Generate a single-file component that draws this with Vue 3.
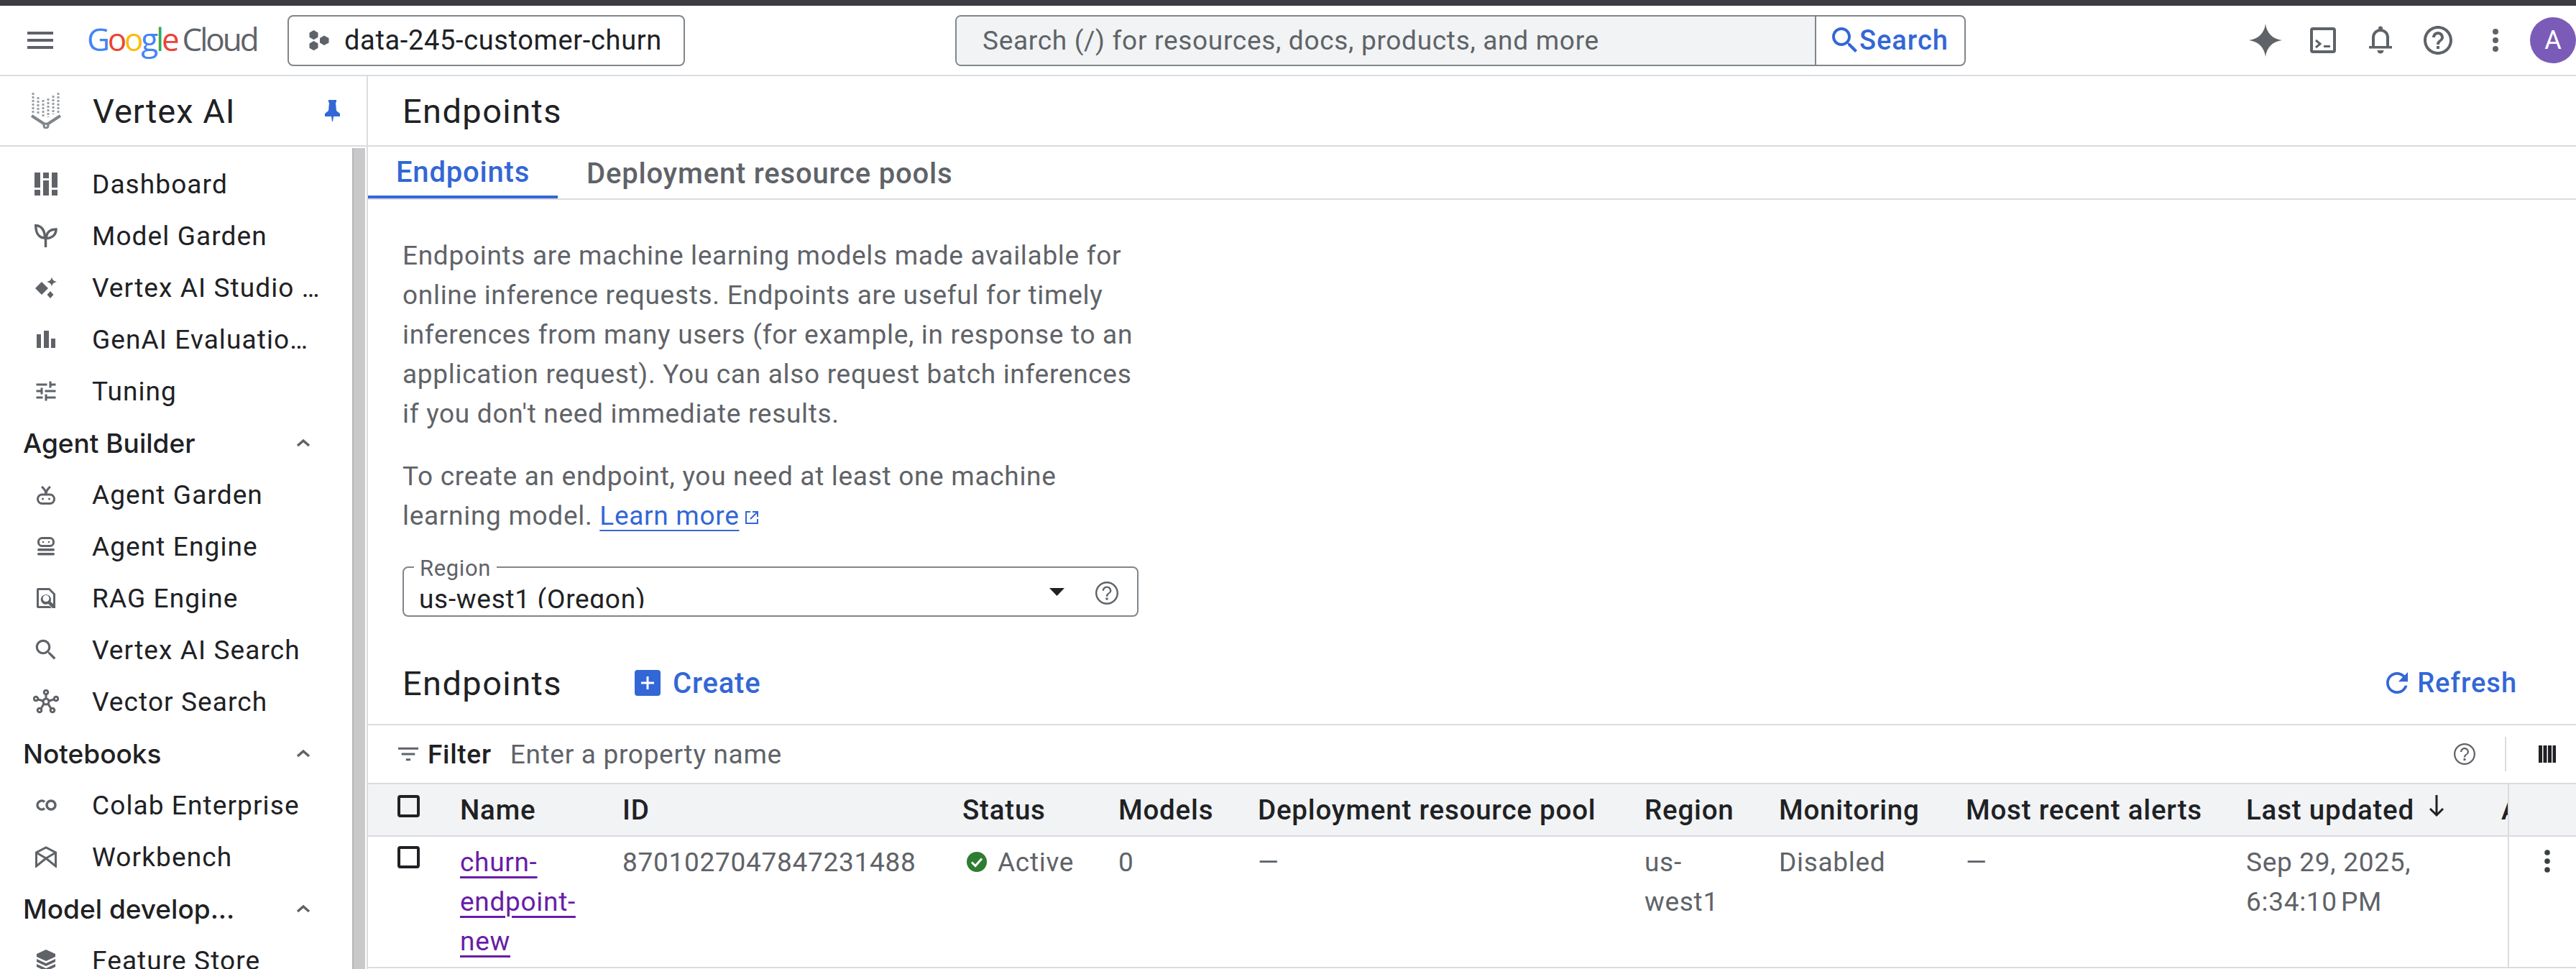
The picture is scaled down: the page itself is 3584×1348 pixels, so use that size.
<script setup>
const navGroups = [
  { items: [
    { label: 'Dashboard', icon: 'dashboard' },
    { label: 'Model Garden', icon: 'sprout' },
    { label: 'Vertex AI Studio Overview', icon: 'spark' },
    { label: 'GenAI Evaluation Service', icon: 'bars' },
    { label: 'Tuning', icon: 'tune' },
  ] },
  { title: 'Agent Builder', items: [
    { label: 'Agent Garden', icon: 'agentGarden' },
    { label: 'Agent Engine', icon: 'agentEngine' },
    { label: 'RAG Engine', icon: 'rag' },
    { label: 'Vertex AI Search', icon: 'search' },
    { label: 'Vector Search', icon: 'vector' },
  ] },
  { title: 'Notebooks', items: [
    { label: 'Colab Enterprise', icon: 'colab' },
    { label: 'Workbench', icon: 'workbench' },
  ] },
  { title: 'Model develop...', items: [
    { label: 'Feature Store', icon: 'store' },
  ] },
]
const heads = ['Name', 'ID', 'Status', 'Models', 'Deployment resource pool', 'Region', 'Monitoring', 'Most recent alerts']
</script>

<template>
  <div class="page">
    <div class="topstrip"></div>
    <header class="topbar">
      <svg class="menu" viewBox="0 0 36 24"><path d="M0 0h36v4H0zM0 10h36v4H0zM0 20h36v4H0z" /></svg>
      <div class="logo"><span class="lb">G</span><span class="lr">o</span><span class="ly">o</span><span class="lb">g</span><span class="lg">l</span><span class="lr">e</span><span class="cloud">Cloud</span></div>
      <div class="project">
        <svg class="project-icon" viewBox="0 0 28 28"><path d="M6.500 0l6 3.400v6.400l-6 3.400-6-3.400V3.400zM6.500 15l6 3.400v6.400l-6 3.400-6-3.400v-6.400zM21 7.500l6.500 3.500v6.500L21 21l-6-3.500V11z" /></svg>
        <span>data-245-customer-churn</span>
      </div>
      <div class="search">
        <div class="search-field">Search (/) for resources, docs, products, and more</div>
        <div class="search-btn">
          <svg class="search-icon" viewBox="3 3 18 18"><path d="M15.500 14h-.79l-.28-.27C15.410 12.590 16 11.110 16 9.500 16 5.910 13.090 3 9.500 3S3 5.910 3 9.500 5.910 16 9.500 16c1.610 0 3.090-.59 4.230-1.570l.27.28v.79l5 4.990L20.490 19l-4.990-5zm-6 0C7.010 14 5 11.990 5 9.500S7.010 5 9.500 5 14 7.010 14 9.500 11.990 14 9.500 14z" /></svg>
          <span>Search</span>
        </div>
      </div>
      <div class="top-actions">
        <div class="act"><svg width="48" height="48" viewBox="0 0 48 48"><path d="M24 1C25.500 14 34 22.500 47 24 34 25.500 25.500 34 24 47 22.500 34 14 25.500 1 24 14 22.500 22.500 14 24 1z" /></svg></div>
        <div class="act"><svg width="36" height="36" viewBox="0 0 36 36"><rect x="2" y="2" width="32" height="32" rx="2" class="ln" /><path d="M8 18l6 5-6 5" class="ln3" /><path d="M19 25h9v3h-9z" /></svg></div>
        <div class="act"><svg width="32" height="40" viewBox="0 0 32 40"><path d="M0 28h32v3.500H0zM11.500 34h9a4.500 4.500 0 0 1-9 0z" /><circle cx="16" cy="3.500" r="3" /><path d="M6 29V16a10 10 0 0 1 20 0v13" class="ln" /></svg></div>
        <div class="act"><svg width="48" height="48" viewBox="0 0 24 24"><path d="M11 18h2v-2h-2v2zm1-16C6.480 2 2 6.480 2 12s4.480 10 10 10 10-4.480 10-10S17.520 2 12 2zm0 18c-4.410 0-8-3.590-8-8s3.590-8 8-8 8 3.590 8 8-3.590 8-8 8zm0-14c-2.210 0-4 1.790-4 4h2c0-1.100.9-2 2-2s2 .9 2 2c0 2-3 1.750-3 5h2c0-2.250 3-2.500 3-5 0-2.210-1.790-4-4-4z" /></svg></div>
        <div class="act"><svg width="8" height="32" viewBox="0 0 8 32"><circle cx="4" cy="4" r="4" /><circle cx="4" cy="16" r="4" /><circle cx="4" cy="28" r="4" /></svg></div>
      </div>
      <div class="avatar">A</div>
    </header>

    <div class="body">
      <aside class="sidebar">
        <div class="side-head">
          <svg class="vertex" viewBox="0 0 44 50">
            <g class="vdots">
              <path d="M4 0v28" stroke-dasharray="3 2" />
              <path d="M11 6v24" stroke-dasharray="3 2" />
              <path d="M18 10v24" stroke-dasharray="3 2" />
              <path d="M25 8v26" stroke-dasharray="3 2" />
              <path d="M32 4v26" stroke-dasharray="3 2" />
              <path d="M39 0v28" stroke-dasharray="3 2" />
            </g>
            <path class="vv" d="M2 32l20 13 20-13" />
            <circle class="vc" cx="22" cy="46" r="3" />
          </svg>
          <span class="side-title">Vertex AI</span>
          <svg class="pin" viewBox="0 0 21 30"><path d="M5 0h11v3l-1 1 1 11 5 4v4H12l-1 7H10l-1-7H0v-4l5-4 1-11-1-1z" /></svg>
        </div>
        <nav class="nav">
          <template v-for="g in navGroups" :key="g.title || 'top'">
            <div v-if="g.title" class="sec">
              <span>{{ g.title }}</span>
              <svg class="chev" viewBox="0 0 20 12"><path d="M2 10l8-7 8 7" /></svg>
            </div>
            <div v-for="it in g.items" :key="it.label" class="nav-row">
              <div class="nav-ic">
                <svg v-if="it.icon === 'dashboard'" width="32" height="32" viewBox="0 0 32 32"><path d="M0 0h8v21H0zM0 24h8v8H0zM12 0h8v8h-8zM12 11h8v21h-8zM24 0h8v21h-8zM24 24h8v8h-8z" /></svg>
                <svg v-else-if="it.icon === 'sprout'" width="32" height="32" viewBox="0 0 32 32"><g class="st"><path d="M14.500 19C6 19 1.750 12 1.750 1.750 10 1.750 14.500 9 14.500 19z" /><path d="M16.500 19.500C24 19.500 30 15 30 7c-8 0-13.500 4-13.500 12.500z" /><path d="M15.500 17v15" /></g></svg>
                <svg v-else-if="it.icon === 'spark'" width="32" height="32" viewBox="0 0 32 32"><path d="M10 8l9 9-9 9-9-9zM24 1c.6 4 2.500 6 7 7-4.500 1-6.400 3-7 7-.6-4-2.500-6-7-7 4.500-1 6.400-3 7-7zM22 21l4.500 5-4.500 5-4.500-5z" /></svg>
                <svg v-else-if="it.icon === 'bars'" width="26" height="24" viewBox="0 0 26 24"><path d="M0 5h6v19H0zM10 0h7v24h-7zM20 11h6v13h-6z" /></svg>
                <svg v-else-if="it.icon === 'tune'" width="36" height="36" viewBox="0 0 24 24"><path d="M3 17v2h6v-2H3zM3 5v2h10V5H3zm10 16v-2h8v-2h-8v-2h-2v6h2zM7 9v2H3v2h4v2h2V9H7zm14 4v-2H11v2h10zm-6-4h2V7h4V5h-4V3h-2v6z" /></svg>
                <svg v-else-if="it.icon === 'agentGarden'" width="26" height="28" viewBox="0 0 26 28"><g class="st2"><rect x="1.500" y="14" width="23" height="12.500" rx="6" /><path d="M13 14c0-5-2-8-6-11M13 14c0-5 2-8 6-11" /></g><circle cx="8.500" cy="20" r="1.500" /><circle cx="17.500" cy="20" r="1.500" /></svg>
                <svg v-else-if="it.icon === 'agentEngine'" width="24" height="26" viewBox="0 0 24 26"><g class="st2"><rect x="1.500" y="1.500" width="21" height="11" rx="5" /></g><circle cx="8" cy="7" r="1.300" /><circle cx="16" cy="7" r="1.300" /><rect y="16" width="24" height="3.500" rx="1.700" /><rect y="22" width="24" height="3.500" rx="1.700" /></svg>
                <svg v-else-if="it.icon === 'rag'" width="26" height="28" viewBox="0 0 26 28"><path fill-rule="evenodd" d="M2 0h16l8 8v20h-4l-6-6c-3 1.500-6 1-8-1-3-3-3-7.500 0-10s7-2.500 10 0c2 2 2.500 5 1.500 8l3.500 3V9l-6-6H3v22h15l3 3H2c-1 0-2-1-2-2V2C0 1 1 0 2 0zM13 10c-2.500 0-4.500 2-4.500 4.500S10.500 19 13 19s4.500-2 4.500-4.500S15.500 10 13 10z" /></svg>
                <svg v-else-if="it.icon === 'search'" width="38" height="38" viewBox="0 0 24 24"><path d="M15.500 14h-.79l-.28-.27C15.410 12.590 16 11.110 16 9.500 16 5.910 13.090 3 9.500 3S3 5.910 3 9.500 5.910 16 9.500 16c1.610 0 3.090-.59 4.230-1.570l.27.28v.79l5 4.990L20.490 19l-4.990-5zm-6 0C7.010 14 5 11.990 5 9.500S7.010 5 9.500 5 14 7.010 14 9.500 11.990 14 9.500 14z" /></svg>
                <svg v-else-if="it.icon === 'vector'" width="36" height="34" viewBox="0 0 36 34"><g class="st2"><circle cx="18" cy="17" r="4" /><circle cx="18" cy="4" r="2.800" /><circle cx="4" cy="13" r="2.800" /><circle cx="32" cy="13" r="2.800" /><circle cx="9" cy="29" r="2.800" /><circle cx="27" cy="29" r="2.800" /><path d="M18 7v6M7 14l7 2M29 14l-7 2M11 27l4-7M25 27l-4-7" /></g></svg>
                <svg v-else-if="it.icon === 'colab'" width="30" height="16" viewBox="0 0 30 16"><g class="st"><path d="M13 3.500a6 6 0 1 0 0 9" /><circle cx="22" cy="8" r="6" /></g></svg>
                <svg v-else-if="it.icon === 'workbench'" width="30" height="30" viewBox="0 0 30 30"><g class="st2"><path d="M1.500 28V9L15 2l13.500 7v19L15 17zM1.500 9L15 17l13.500-8" /></g></svg>
                <svg v-else-if="it.icon === 'store'" width="26" height="30" viewBox="0 0 26 30"><path d="M13 0l13 6v4l-13 6L0 10V6zM0 13l13 6 13-6v4l-13 6-13-6zM0 20l13 6 13-6v4l-13 6-13-6z" /></svg>
              </div>
              <span class="nav-label">{{ it.label }}</span>
            </div>
          </template>
        </nav>
        <div class="scrollbar"></div>
      </aside>

      <main class="main">
        <h1 class="page-title">Endpoints</h1>
        <div class="tabs">
          <div class="tab active">Endpoints</div>
          <div class="tab">Deployment resource pools</div>
        </div>
        <section class="intro">
          <p>Endpoints are machine learning models made available for online inference requests. Endpoints are useful for timely inferences from many users (for example, in response to an application request). You can also request batch inferences if you don't need immediate results.</p>
          <p class="p2">To create an endpoint, you need at least one machine learning model. <a class="more">Learn more</a><svg class="ext" viewBox="0 0 20 20"><path d="M8 2H2v16h16v-6M11 2h7v7M18 2L8 12" /></svg></p>
          <div class="select">
            <span class="sel-label">Region</span>
            <div class="sel-value">us-west1 (Oregon)</div>
            <svg class="sel-arrow" viewBox="0 0 21 11"><path d="M0 0h21L10.500 11z" /></svg>
            <svg class="sel-help" viewBox="2 2 20 20"><path d="M11 18h2v-2h-2v2zm1-16C6.480 2 2 6.480 2 12s4.480 10 10 10 10-4.480 10-10S17.520 2 12 2zm0 18.500c-4.700 0-8.500-3.800-8.500-8.500S7.300 3.500 12 3.500s8.500 3.800 8.500 8.500-3.800 8.500-8.500 8.500zM12 6c-2.210 0-4 1.790-4 4h1.500c0-1.400 1.100-2.500 2.500-2.500s2.500 1.100 2.500 2.500c0 2.200-3.300 2-3.300 5h1.600c0-2.400 3.200-2.600 3.200-5 0-2.210-1.790-4-4-4z" /></svg>
          </div>
        </section>
        <div class="list-head">
          <h2 class="list-title">Endpoints</h2>
          <div class="create">
            <svg class="create-ic" viewBox="0 0 36 36"><rect width="36" height="36" rx="4" /><path class="plus" d="M16.500 9h3v7.500H27v3h-7.500V27h-3v-7.500H9v-3h7.500z" /></svg>
            <span>Create</span>
          </div>
          <div class="refresh">
            <svg class="refresh-ic" viewBox="4 4 16 16"><path d="M17.650 6.350C16.200 4.900 14.210 4 12 4c-4.420 0-7.990 3.580-7.990 8s3.570 8 7.990 8c3.730 0 6.840-2.550 7.730-6h-2.080c-.82 2.330-3.040 4-5.650 4-3.310 0-6-2.690-6-6s2.690-6 6-6c1.660 0 3.140.69 4.220 1.780L13 11h7V4l-2.350 2.350z" /></svg>
            <span>Refresh</span>
          </div>
        </div>
        <div class="filter">
          <svg class="filter-ic" viewBox="3 6 18 12"><path d="M10 18h4v-2h-4v2zM3 6v2h18V6H3zm3 7h12v-2H6v2z" /></svg>
          <span class="filter-lb">Filter</span>
          <span class="filter-ph">Enter a property name</span>
          <svg class="filter-help" viewBox="2 2 20 20"><path d="M11 18h2v-2h-2v2zm1-16C6.480 2 2 6.480 2 12s4.480 10 10 10 10-4.480 10-10S17.520 2 12 2zm0 18.500c-4.700 0-8.500-3.800-8.500-8.500S7.300 3.500 12 3.500s8.500 3.800 8.500 8.500-3.800 8.500-8.500 8.500zM12 6c-2.210 0-4 1.790-4 4h1.500c0-1.400 1.100-2.500 2.500-2.500s2.500 1.100 2.500 2.500c0 2.200-3.300 2-3.300 5h1.600c0-2.400 3.200-2.600 3.200-5 0-2.210-1.790-4-4-4z" /></svg>
          <div class="filter-sep"></div>
          <svg class="cols" viewBox="0 0 24 24"><path d="M0 0h5v24H0zM6.500 0h5v24h-5zM13 0h5v24h-5zM19.500 0H24v24h-4.500z" /></svg>
        </div>
        <div class="grid head">
          <div class="cell check"><span class="box"></span></div>
          <div v-for="h in heads" :key="h" class="cell">{{ h }}</div>
          <div class="cell sort">Last updated <svg class="arrow" viewBox="0 0 24 34"><path d="M12 2v28M3 21l9 9 9-9" /></svg></div>
          <div class="cell clip">Actions</div>
          <div class="cell action"></div>
        </div>
        <div class="grid row">
          <div class="cell check"><span class="box"></span></div>
          <div class="cell name"><a class="link">churn-endpoint-new</a></div>
          <div class="cell">8701027047847231488</div>
          <div class="cell status">
            <svg class="ok" viewBox="0 0 28 28"><circle cx="14" cy="14" r="14" /><path d="M7 14.500l5 5 9-10" /></svg>
            <span>Active</span>
          </div>
          <div class="cell">0</div>
          <div class="cell">—</div>
          <div class="cell region">us-west1</div>
          <div class="cell">Disabled</div>
          <div class="cell">—</div>
          <div class="cell date">Sep 29, 2025, 6:34:10&#8239;PM</div>
          <div class="cell clip"></div>
          <div class="cell action">
            <svg class="kebab" viewBox="0 0 8 32"><circle cx="4" cy="4" r="3.800" /><circle cx="4" cy="16" r="3.800" /><circle cx="4" cy="28" r="3.800" /></svg>
          </div>
        </div>
      </main>
    </div>
  </div>
</template>

<style>
html, body { margin: 0; background: #fff; overflow: hidden; }
</style>

<style scoped>
.page {
  width: 3584px; height: 1348px; overflow: hidden; background: #fff; color: #202124;
  font-family: Roboto, "Liberation Sans", sans-serif; font-size: 37px; letter-spacing: 0.7px;
}
.topstrip { height: 8px; background: #3c3c41; }
.topbar { height: 96px; display: flex; align-items: center; border-bottom: 2px solid #dadce0; fill: #5f6368; }
.menu { width: 36px; height: 24px; margin-left: 38px; }
.logo { margin-left: 47px; width: 231px; flex: none; font-family: "Open Sans", sans-serif; font-size: 44px; letter-spacing: -3.200px; white-space: nowrap; line-height: 1; margin-top: -4px; }
.lb { color: #4285f4; } .lr { color: #ea4335; } .ly { color: #fbbc05; } .lg { color: #34a853; }
.cloud { color: #5f6368; margin-left: 7px; letter-spacing: -3px; }
.project { margin-left: 48px; width: 553px; height: 71px; box-sizing: border-box; border: 2px solid #80868b; border-radius: 8px; display: flex; align-items: center; padding-left: 28px; gap: 21px; white-space: nowrap; font-size: 38px; letter-spacing: 0.65px; }
.project-icon { width: 28px; height: 28px; flex: none; }
.search { margin-left: 376px; width: 1406px; height: 71px; box-sizing: border-box; border: 2px solid #80868b; border-radius: 8px; display: flex; overflow: hidden; }
.search-field { flex: 1; background: #f1f3f4; color: #5f6368; padding-left: 36px; display: flex; align-items: center; white-space: nowrap; }
.search-btn { width: 208px; flex: none; border-left: 2px solid #80868b; box-sizing: border-box; display: flex; align-items: center; color: #3367d6; font-weight: 500; font-size: 38px; letter-spacing: 1px; padding-left: 22px; fill: #3367d6; gap: 2px; }
.search-icon { width: 36px; height: 36px; }
.top-actions { margin-left: 377px; display: flex; }
.act { width: 80px; height: 80px; display: flex; align-items: center; justify-content: center; }
.ln { fill: none; stroke: #5f6368; stroke-width: 4; }
.ln3 { fill: none; stroke: #5f6368; stroke-width: 3; }
.avatar { margin-left: 8px; width: 64px; height: 64px; border-radius: 50%; background: #7b5bb8; color: #fff; display: flex; align-items: center; justify-content: center; font-size: 36px; letter-spacing: 0; }

.body { display: flex; height: 1242px; }
.sidebar { width: 512px; flex: none; box-sizing: border-box; border-right: 2px solid #dadce0; position: relative; overflow: hidden; }
.side-head { height: 96px; border-bottom: 2px solid #dadce0; display: flex; align-items: center; position: relative; }
.vertex { width: 44px; height: 50px; margin-left: 42px; flex: none; }
.vdots { fill: none; stroke: #9aa0a6; stroke-width: 3; }
.vv { fill: none; stroke: #80868b; stroke-width: 4; }
.vc { fill: #fff; stroke: #80868b; stroke-width: 3; }
.side-title { margin-left: 43px; width: 198px; flex: none; font-size: 47px; letter-spacing: 1px; white-space: nowrap; }
.pin { width: 21px; height: 30px; margin-left: 125px; fill: #3367d6; flex: none; }
.nav { padding-top: 16px; width: 490px; }
.nav-row { height: 72px; display: flex; align-items: center; fill: #5f6368; letter-spacing: 1.1px; }
.nav-ic { width: 40px; height: 40px; margin-left: 44px; margin-right: 44px; display: flex; align-items: center; justify-content: center; flex: none; }
.nav-label { width: 318px; overflow: hidden; text-overflow: ellipsis; white-space: nowrap; }
.st { fill: none; stroke: #5f6368; stroke-width: 3.500; }
.st2 { fill: none; stroke: #5f6368; stroke-width: 3; }
.sec { height: 72px; display: flex; align-items: center; padding-left: 32px; font-family: Inter, sans-serif; font-weight: 500; font-size: 37px; letter-spacing: 0; position: relative; }
.chev { position: absolute; left: 412px; top: 30px; width: 20px; height: 12px; fill: none; stroke: #5f6368; stroke-width: 3.500; }
.scrollbar { position: absolute; left: 490px; top: 100px; width: 18px; bottom: 0; background: #c9c9c9; border-left: 2px solid #b5b5b5; box-sizing: border-box; }

.main { flex: 1; min-width: 0; overflow: hidden; }
.page-title { height: 96px; margin: 0; border-bottom: 2px solid #dadce0; display: flex; align-items: center; padding-left: 48px; font-weight: 400; font-size: 47px; letter-spacing: 1.400px; }
.tabs { display: flex; height: 72px; border-bottom: 2px solid #dadce0; font-size: 40px; letter-spacing: 0.8px; }
.tab { padding: 2px 40px 0; display: flex; align-items: center; font-weight: 500; color: #5f6368; }
.tab.active { width: 264px; box-sizing: border-box; justify-content: center; padding: 2px 0 0; color: #3367d6; border-bottom: 4px solid #3367d6; height: 72px; }
.intro { padding: 50px 0 0 48px; width: 1024px; color: #5f6368; line-height: 55px; }
.intro p { margin: 0; }
.intro .p2 { margin-top: 32px; }
.more { color: #3367d6; text-decoration: underline; text-underline-offset: 7px; text-decoration-thickness: 2px; }
.ext { width: 20px; height: 20px; margin-left: 8px; fill: none; stroke: #3367d6; stroke-width: 2; vertical-align: 0; }
.select { margin-top: 43px; height: 70px; box-sizing: border-box; border: 2px solid #80868b; border-radius: 8px; position: relative; }
.sel-label { position: absolute; left: 14px; top: -17px; background: #fff; padding: 0 8px; font-size: 31px; line-height: 36px; letter-spacing: 0.6px; color: #5f6368; }
.sel-value { position: absolute; left: 21px; top: 22px; height: 34px; overflow: hidden; line-height: 44px; color: #202124; }
.sel-arrow { position: absolute; left: 898px; top: 28px; width: 21px; height: 11px; fill: #202124; }
.sel-help { position: absolute; left: 962px; top: 19px; width: 32px; height: 32px; fill: #5f6368; }
.list-head { margin: 44px 0 9px 0; height: 96px; display: flex; align-items: center; padding-left: 48px; }
.list-title { margin: 0; font-weight: 400; font-size: 47px; letter-spacing: 1.400px; width: 323px; flex: none; }
.create { display: flex; align-items: center; gap: 17px; color: #3367d6; font-weight: 500; fill: #3367d6; font-size: 40px; letter-spacing: 0.8px; }
.create-ic { width: 36px; height: 36px; }
.plus { fill: #fff; }
.refresh { margin-left: auto; margin-right: 82px; display: flex; align-items: center; gap: 13px; color: #3367d6; font-weight: 500; fill: #3367d6; font-size: 38px; letter-spacing: 1px; }
.refresh-ic { width: 30px; height: 30px; }
.filter { height: 80px; border-top: 2px solid #dadce0; display: flex; align-items: center; padding-left: 42px; }
.filter-ic { width: 28px; height: 20px; fill: #5f6368; }
.filter-lb { margin-left: 13px; font-weight: 500; }
.filter-ph { margin-left: 26px; color: #5f6368; }
.filter-help { width: 30px; height: 30px; margin-left: auto; fill: #5f6368; }
.filter-sep { width: 2px; height: 48px; background: #dadce0; margin-left: 41px; }
.cols { width: 24px; height: 24px; margin-left: 45px; margin-right: 28px; fill: #202124; }
.grid { display: grid; grid-template-columns: 128px 226px 473px 217px 194px 538px 187px 260px 390px 355px 9px 95px; border-top: 2px solid #dadce0; }
.head { height: 71px; background: #f1f3f4; font-weight: 500; color: #202124; font-size: 38.500px; letter-spacing: 0.8px; }
.head .cell { display: flex; align-items: center; white-space: nowrap; }
.row { height: 181px; border-bottom: 2px solid #dadce0; color: #5f6368; line-height: 55px; }
.row .cell { padding-top: 8px; }
.check { padding-left: 41px; }
.head .check { align-items: flex-start; padding-top: 15px; }
.row .check { padding-top: 13px; }
.box { display: block; width: 31px; height: 31px; box-sizing: border-box; border: 4px solid #202124; border-radius: 4px; }
.sort { gap: 12px; position: relative; }
.arrow { position: absolute; left: 251px; top: 13px; width: 28px; height: 34px; fill: none; stroke: #202124; stroke-width: 3; }
.clip { overflow: hidden; white-space: nowrap; }
.action { border-left: 2px solid #dadce0; box-sizing: border-box; }
.head .action { background: #f1f3f4; }
.name { width: 170px; }
.link { color: #681da8; text-decoration: underline; text-underline-offset: 7px; text-decoration-thickness: 3px; }
.status { display: flex; align-items: flex-start; gap: 15px; padding-left: 6px; }
.ok { width: 28px; height: 28px; margin-top: 13px; flex: none; fill: #2e7d32; stroke: none; }
.ok path { fill: none; stroke: #fff; stroke-width: 3; }
.region { width: 100px; }
.date { width: 340px; }
.kebab { width: 8px; height: 32px; margin-left: 49px; margin-top: 10px; fill: #3c4043; display: block; }
</style>
